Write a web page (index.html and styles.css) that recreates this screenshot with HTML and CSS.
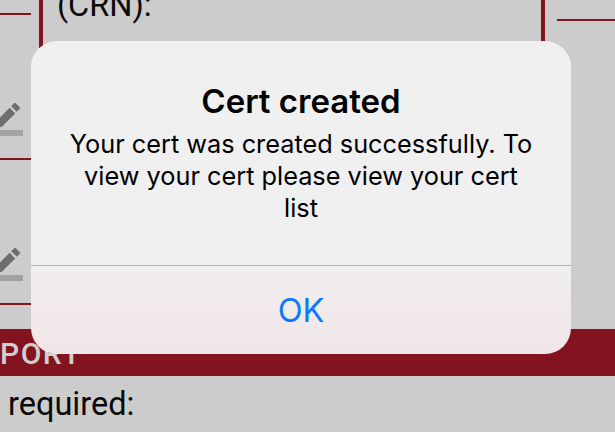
FILE: index.html
```html
<!DOCTYPE html>
<html lang="en">
<head>
<meta charset="utf-8">
<title>Cert created</title>
<link rel="stylesheet" href="styles.css">
</head>
<body>
<div class="page">
  <div class="top">
    <div class="rail">
      <div class="rail-row first"></div>
      <div class="rail-row">
        <svg class="edit" viewBox="0 0 24 24"><path class="bar" d="M22 24H-8v-4h30z"/><path class="pen" d="M13.06 5.19l3.75 3.75L7.75 18H4v-3.75l9.06-9.06zm4.82 2.68-3.75-3.75 1.83-1.83c.39-.39 1.02-.39 1.41 0l2.34 2.34c.39.39.39 1.02 0 1.41l-1.83 1.83z"/></svg>
      </div>
      <div class="rail-row">
        <svg class="edit" viewBox="0 0 24 24"><path class="bar" d="M22 24H-8v-4h30z"/><path class="pen" d="M13.06 5.19l3.75 3.75L7.75 18H4v-3.75l9.06-9.06zm4.82 2.68-3.75-3.75 1.83-1.83c.39-.39 1.02-.39 1.41 0l2.34 2.34c.39.39.39 1.02 0 1.41l-1.83 1.83z"/></svg>
      </div>
    </div>
    <div class="box"><span class="crn">(CRN):</span></div>
    <div class="side"></div>
  </div>
  <div class="band">PORT</div>
  <div class="req">required:</div>
</div>
<div class="dialog">
  <div class="dialog-body">
    <h1 class="dialog-title">Cert created</h1>
    <p class="dialog-text">Your cert was created successfully. To view your cert please view your cert list</p>
  </div>
  <div class="dialog-action">OK</div>
</div>
</body>
</html>
```
FILE: styles.css
```css
html, body { margin: 0; padding: 0; }
body {
  position: relative;
  width: 615px;
  height: 432px;
  overflow: hidden;
  background: #cccccc;
}
.page { display: flex; flex-direction: column; height: 432px; font-family: Roboto, sans-serif; color: #0a0a0a; }
.top { display: flex; height: 329px; flex: none; }
.rail { width: 31px; flex: none; overflow: hidden; }
.rail-row {
  height: 145px;
  box-sizing: border-box;
  border-bottom: 2px solid #83141f;
  padding-bottom: 22px;
  display: flex;
  align-items: flex-end;
}
.rail-row.first { height: 15px; padding: 0; }
.edit { width: 36px; height: 36px; margin-left: -10px; flex: none; overflow: visible; }
.pen { fill: #6e6e6e; }
.bar { fill: #a3a3a3; }
.box {
  width: 506px;
  box-sizing: border-box;
  margin-left: 8px;
  flex: none;
  border-left: 4px solid #83141f;
  border-right: 4px solid #83141f;
  padding-left: 14px;
  overflow: hidden;
}
.crn { display: block; font-size: 32.5px; line-height: 38px; margin-top: -14px; }
.side { margin-left: 12px; flex: 1; height: 21px; box-sizing: border-box; border-bottom: 2px solid #83141f; }
.band {
  height: 47px;
  flex: none;
  background: #83141f;
  color: #cfcfcf;
  font-size: 30px;
  font-weight: 500;
  line-height: 50px;
  letter-spacing: 1.5px;
}
.req { font-size: 32.5px; line-height: 38px; padding: 9px 0 0 8px; }
.dialog {
  position: absolute;
  left: 31px;
  top: 41px;
  width: 540px;
  height: 313px;
  border-radius: 26px;
  background: linear-gradient(180deg, #f1f0f1 0%, #f0eff0 70%, #f0e5e6 100%);
  display: flex;
  flex-direction: column;
  font-family: Inter, sans-serif;
  text-align: center;
}
.dialog-body { height: 225px; flex: none; box-sizing: border-box; padding: 39px 36px 0; border-bottom: 1px solid #b3b1b1; }
.dialog-title { margin: 0; font-size: 33px; line-height: 42px; font-weight: 600; color: #000; }
.dialog-text { margin: 6px 0 0; font-size: 25.3px; line-height: 32px; color: #000; }
.dialog-action { flex: 1; display: flex; align-items: center; justify-content: center; color: #0a7aff; font-size: 32.5px; }
```
